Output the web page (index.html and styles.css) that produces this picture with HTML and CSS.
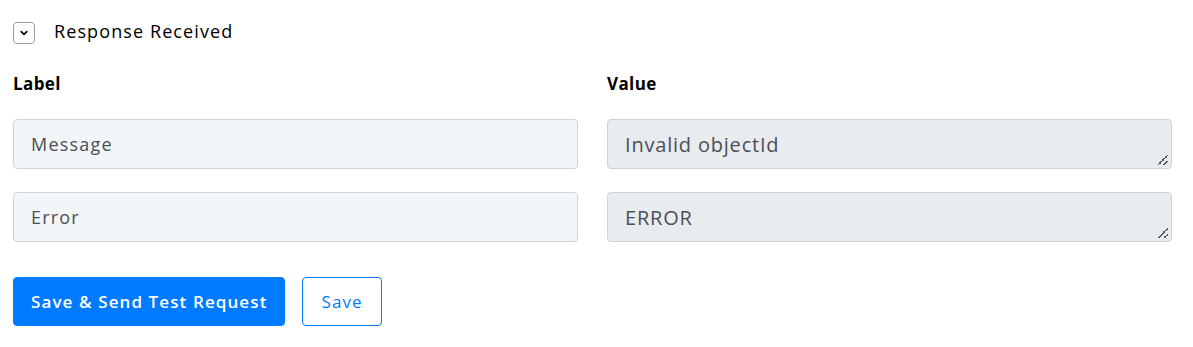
FILE: index.html
```html
<!DOCTYPE html>
<html lang="en">
<head>
  <meta charset="UTF-8">
  <title>Response Received</title>
  <link rel="stylesheet" href="styles.css">
</head>
<body>
<div class="panel">
  <div class="toggle-row">
    <span class="toggle">
      <svg width="12" height="12" viewBox="0 0 12 12"><path d="M3.2 4.6 L6 7.4 L8.8 4.6" fill="none" stroke="#111" stroke-width="1.8" stroke-linecap="round" stroke-linejoin="round"/></svg>
    </span>
    <span class="toggle-title">Response Received</span>
  </div>

  <div class="grid">
    <div class="col-head">Label</div>
    <div class="col-head">Value</div>

    <input class="field" type="text" value="Message" readonly>
    <div class="value-box"><span>Invalid objectId</span><i class="grip"></i></div>

    <input class="field" type="text" value="Error" readonly>
    <div class="value-box"><span>ERROR</span><i class="grip"></i></div>
  </div>

  <div class="actions">
    <button class="btn btn-primary">Save &amp; Send Test Request</button>
    <button class="btn btn-outline">Save</button>
  </div>
</div>
</body>
</html>
```

FILE: styles.css
```css
body { margin: 0; background: #fff; font-family: "Open Sans", "Noto Sans", sans-serif; color: #111; }
.panel { padding: 21px 21px 0 13px; }
.toggle-row { display: flex; align-items: center; gap: 19px; height: 24px; }
.toggle { width: 20px; height: 20px; border: 1px solid #9aa0a6; border-radius: 4px; display: flex; align-items: center; justify-content: center; }
.toggle-title { font-size: 18px; letter-spacing: 1.1px; line-height: 20px; margin-top: -4px; color: #000; }
.grid { display: grid; grid-template-columns: 1fr 1fr; column-gap: 29px; row-gap: 23px; margin-top: 27px; }
.col-head { font-size: 17px; font-weight: 700; height: 24px; letter-spacing: 0.4px; color: #000; }
.field, .value-box { box-sizing: border-box; height: 50px; border: 1px solid #ced4da; border-radius: 4px; font-family: "Open Sans", "Noto Sans", sans-serif; font-size: 18px; color: #495057; letter-spacing: 1.2px; }
.field { width: 100%; background: #f3f6f9; padding: 0 17px; outline: none; }
.value-box { background: #e9ecef; padding: 0 17px; display: flex; align-items: center; position: relative; font-size: 20px; letter-spacing: 0.8px; }
.grip { position: absolute; right: 3px; bottom: 3px; width: 10px; height: 10px;
  background: linear-gradient(135deg, transparent 45%, #555 45%, #555 55%, transparent 55%, transparent 75%, #555 75%, #555 85%, transparent 85%); }
.actions { display: flex; gap: 17px; margin-top: 35px; }
.btn { height: 49px; border-radius: 4px; font-family: "Open Sans", "Noto Sans", sans-serif; font-size: 17px; font-weight: 600; padding: 0 17px; cursor: pointer; letter-spacing: 1.1px; }
.btn-primary { background: #007bff; border: 1px solid #007bff; color: #fff; }
.btn-outline { background: #fff; border: 1px solid #007bff; color: #007bff; font-weight: 500; padding: 0 18px; }
```
